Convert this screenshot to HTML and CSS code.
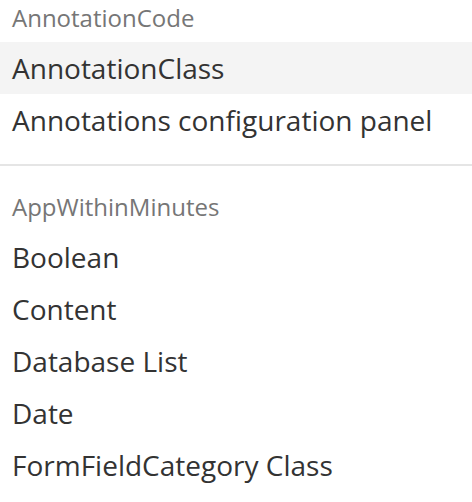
FILE: index.html
```html
<!DOCTYPE html>
<html>
<head>
<meta charset="utf-8">
<link rel="stylesheet" href="styles.css">
</head>
<body>
<ul class="menu">
  <li class="menu-header">AnnotationCode</li>
  <li class="menu-item active">AnnotationClass</li>
  <li class="menu-item">Annotations configuration panel</li>
  <li class="menu-divider"></li>
  <li class="menu-header">AppWithinMinutes</li>
  <li class="menu-item">Boolean</li>
  <li class="menu-item">Content</li>
  <li class="menu-item">Database List</li>
  <li class="menu-item">Date</li>
  <li class="menu-item">FormFieldCategory Class</li>
</ul>
</body>
</html>
```
FILE: styles.css
```css
html, body {
  margin: 0;
  padding: 0;
  background: #ffffff;
}
body {
  font-family: "Open Sans", "Liberation Sans", sans-serif;
  overflow: hidden;
}
.menu {
  list-style: none;
  margin: 0;
  padding: 0;
  display: flex;
  flex-direction: column;
}
.menu-header {
  font-size: 24px;
  line-height: 34px;
  padding: 1px 12px 7px;
  color: #767676;
}
.menu-item {
  font-size: 28px;
  line-height: 40px;
  padding: 6px 12px;
  color: #333333;
  white-space: nowrap;
}
.menu-item.active {
  background: #f4f4f4;
}
.menu-divider {
  height: 2px;
  margin: 18px 0 23px;
  background: #e5e5e5;
}
```
